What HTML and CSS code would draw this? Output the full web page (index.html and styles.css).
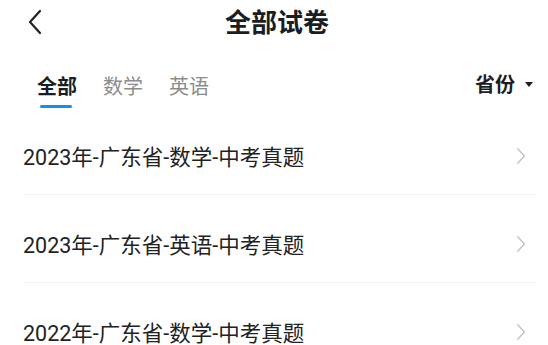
FILE: index.html
```html
<!DOCTYPE html>
<html lang="zh-CN">
<head>
<meta charset="utf-8">
<link rel="stylesheet" href="styles.css">
</head>
<body>
<div class="page">
  <header class="header">
    <svg class="back" width="16" height="26" viewBox="0 0 16 26"><path d="M13 2 L3 13 L13 24" fill="none" stroke="#222" stroke-width="2.2" stroke-linecap="round" stroke-linejoin="round"/></svg>
    <h1 class="title">全部试卷</h1>
  </header>
  <nav class="tabs">
    <div class="tab-list">
      <span class="tab active">全部</span>
      <span class="tab">数学</span>
      <span class="tab">英语</span>
    </div>
    <div class="filter">省份<span class="caret"></span></div>
  </nav>
  <ul class="list">
    <li class="row"><span class="name">2023年-广东省-数学-中考真题</span><svg class="chev" width="10" height="18" viewBox="0 0 10 18"><path d="M1.5 1.5 L8.5 9 L1.5 16.5" fill="none" stroke="#bdbdbd" stroke-width="1.3"/></svg></li>
    <li class="row"><span class="name">2023年-广东省-英语-中考真题</span><svg class="chev" width="10" height="18" viewBox="0 0 10 18"><path d="M1.5 1.5 L8.5 9 L1.5 16.5" fill="none" stroke="#bdbdbd" stroke-width="1.3"/></svg></li>
    <li class="row"><span class="name">2022年-广东省-数学-中考真题</span><svg class="chev" width="10" height="18" viewBox="0 0 10 18"><path d="M1.5 1.5 L8.5 9 L1.5 16.5" fill="none" stroke="#bdbdbd" stroke-width="1.3"/></svg></li>
  </ul>
</div>
</body>
</html>
```
FILE: styles.css
```css
html, body {
  margin: 0;
  padding: 0;
  background: #fff;
}
body {
  font-family: "Roboto", "Noto Sans CJK SC", sans-serif;
  color: #1f1f1f;
  width: 548px;
  height: 345px;
  overflow: hidden;
}
.page {
  display: flex;
  flex-direction: column;
}
.header {
  position: relative;
  height: 44px;
  display: flex;
  align-items: center;
  justify-content: center;
}
.back {
  position: absolute;
  left: 27px;
  top: 9px;
}
.title {
  margin: 0;
  font-size: 26px;
  font-weight: 700;
  line-height: 30px;
  color: #1a1e24;
  margin-top: -2px;
  margin-left: 6px;
  font-family: "Noto Sans CJK SC", sans-serif;
}
.tabs {
  display: flex;
  align-items: flex-start;
  justify-content: space-between;
  padding: 30px 15px 0 37px;
  height: 33px;
}
.tab-list {
  display: flex;
  gap: 26px;
}
.tab {
  position: relative;
  font-family: "Noto Sans CJK SC", sans-serif;
  font-size: 20px;
  line-height: 24px;
  color: #8c8c8c;
}
.tab.active {
  color: #1a1e24;
  font-weight: 700;
}
.tab.active::after {
  content: "";
  position: absolute;
  left: 3px;
  right: 5px;
  top: 31px;
  height: 3px;
  border-radius: 2px;
  background: #1a8cf0;
}
.filter {
  display: flex;
  align-items: center;
  font-family: "Noto Sans CJK SC", sans-serif;
  font-size: 20px;
  line-height: 24px;
  font-weight: 700;
  color: #1a1e24;
  margin-top: -2px;
}
.caret {
  width: 0;
  height: 0;
  border-left: 4.5px solid transparent;
  border-right: 4.5px solid transparent;
  border-top: 5px solid #1a1e24;
  margin-left: 10px;
  margin-top: 1px;
}
.list {
  list-style: none;
  margin: 0;
  padding: 0;
}
.row {
  margin: 0 12px 0 24px;
  padding: 40px 10px 25px 0;
  border-bottom: 1px solid #f2f2f2;
  display: flex;
  align-items: center;
  justify-content: space-between;
  height: 22px;
}
.name {
  font-size: 21.5px;
  line-height: 22px;
  color: #222;
  margin-left: -1px;
}
.chev {
  margin-top: -5px;
}
```
